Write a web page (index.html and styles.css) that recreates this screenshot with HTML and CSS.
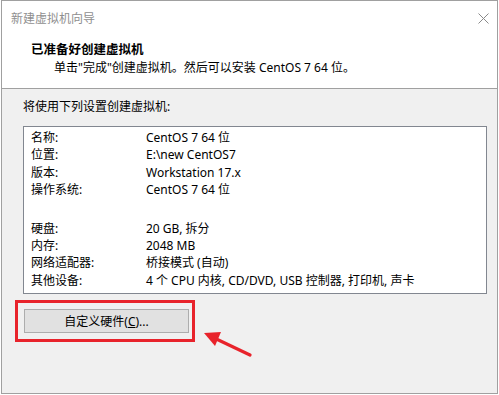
FILE: index.html
```html
<!DOCTYPE html>
<html lang="zh-CN">
<head>
  <meta charset="UTF-8">
  <meta name="viewport" content="width=device-width, initial-scale=1.0">
  <title>新建虚拟机向导</title>
  <link rel="stylesheet" href="styles.css">
</head>
<body>
  <div class="window">
    <div class="header">
      <div class="titlebar">
        <span class="title">新建虚拟机向导</span>
        <svg class="close" width="11" height="11" viewBox="0 0 11 11">
          <path d="M0.5 0.5 L10.5 10.5 M10.5 0.5 L0.5 10.5" stroke="#8a8a8a" stroke-width="1" fill="none"/>
        </svg>
      </div>
      <div class="heading">已准备好创建虚拟机</div>
      <div class="subline">单击"完成"创建虚拟机。然后可以安装 CentOS 7 64 位。</div>
    </div>

    <div class="content">
      <div class="intro">将使用下列设置创建虚拟机:</div>

      <div class="settings">
        <div class="row"><span>名称:</span><span>CentOS 7 64 位</span></div>
        <div class="row"><span>位置:</span><span>E:\new CentOS7</span></div>
        <div class="row"><span>版本:</span><span>Workstation 17.x</span></div>
        <div class="row"><span>操作系统:</span><span>CentOS 7 64 位</span></div>
        <div class="spacer"></div>
        <div class="row"><span>硬盘:</span><span>20 GB, 拆分</span></div>
        <div class="row"><span>内存:</span><span>2048 MB</span></div>
        <div class="row"><span>网络适配器:</span><span>桥接模式 (自动)</span></div>
        <div class="row"><span>其他设备:</span><span>4 个 CPU 内核, CD/DVD, USB 控制器, 打印机, 声卡</span></div>
      </div>

      <div class="highlight">
        <button class="btn">自定义硬件(<u>C</u>)...</button>
      </div>
    </div>

    <!-- annotation arrow -->
    <svg class="arrow" width="60" height="36" viewBox="0 0 60 36">
      <path d="M10 8 L50 27" stroke="#e8232b" stroke-width="3.2" stroke-linecap="round" fill="none"/>
      <path d="M4 5 L21 4 L15 18 Z" fill="#e8232b"/>
    </svg>
  </div>
</body>
</html>
```

FILE: styles.css
```css
* {
  box-sizing: border-box;
}
body {
  margin: 0;
  background: #ffffff;
  font-family: "Noto Sans", "Noto Sans CJK SC", sans-serif;
  font-size: 12px;
  color: #000;
}
.window {
  position: relative;
  margin-left: 1px;
  width: 497px;
  height: 394px;
  border: 1px solid #a0a0a0;
  background: #f0f0f0;
}
.header {
  height: 88px;
  background: #fff;
  border-bottom: 1px solid #a0a0a0;
  padding-top: 9px;
}
.titlebar {
  display: flex;
  justify-content: space-between;
  align-items: center;
  height: 17px;
  padding: 0 8px 0 9px;
}
.title {
  color: #8f8f8f;
  line-height: 17px;
}
.close {
  display: block;
  margin-top: 0px;
}
.heading {
  margin-top: 14px;
  padding-left: 29px;
  font-weight: bold;
  font-size: 12.5px;
  line-height: 17px;
}
.subline {
  margin-top: 1px;
  padding-left: 52px;
  line-height: 17px;
}
.content {
  padding-top: 9px;
}
.intro {
  padding-left: 21px;
  line-height: 17px;
}
.settings {
  margin: 11px 10px 0 21px;
  background: #fff;
  border: 1px solid #828790;
  padding: 2px 0 4px 7px;
}
.row {
  display: grid;
  grid-template-columns: 115px 1fr;
  line-height: 17.4px;
  white-space: nowrap;
}
.spacer {
  height: 21px;
}
.highlight {
  width: fit-content;
  margin: 6px 0 0 13px;
  border: 3px solid #e8232b;
  padding: 6px 3px 6px 6px;
}
.btn {
  display: block;
  width: 165px;
  height: 24px;
  background: #e1e1e1;
  border: 1px solid #adadad;
  font-family: inherit;
  font-size: 12px;
  color: #000;
  padding: 0;
}
.arrow {
  position: absolute;
  left: 198px;
  top: 327px;
}
```
